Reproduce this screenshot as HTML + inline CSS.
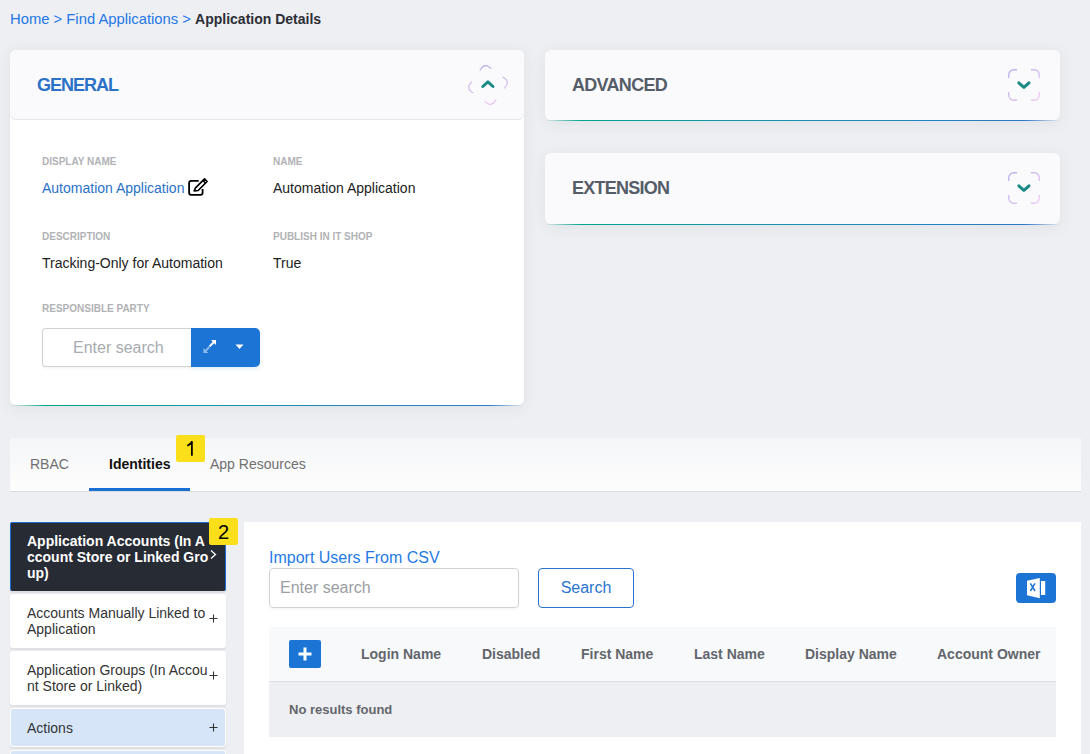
<!DOCTYPE html>
<html><head><meta charset="utf-8">
<style>
*{box-sizing:border-box;margin:0;padding:0}
html,body{width:1090px;height:754px;overflow:hidden}
body{background:#eeeff2;font-family:"Liberation Sans",sans-serif;position:relative;color:#222}
.abs{position:absolute}
.bc{left:10px;top:10px;font-size:14.8px;line-height:18px;color:#2478e6;white-space:nowrap}
.bc b{color:#2b2e35;font-size:14px}
.card{background:#fff;border-radius:6px;box-shadow:0 3px 16px rgba(40,50,90,.07)}
.card .hd{position:absolute;left:0;top:0;right:0;height:69px;background:#fafafc;border-radius:6px;box-shadow:0 1px 0 #e4e6ea}
.line{position:absolute;left:0;right:0;bottom:-1px;height:1px;background:linear-gradient(90deg,rgba(0,165,140,0) 0%,#00a58c 7%,#1b8fb0 50%,#2a7ac8 93%,rgba(42,122,200,0) 100%)}
.title{position:absolute;left:27px;top:26px;font-size:18px;font-weight:bold;line-height:18px;letter-spacing:-1.1px}
.lbl{font-size:10px;font-weight:bold;color:#b1b2b5;line-height:12px;white-space:nowrap}
.val{font-size:14px;color:#222;line-height:16px;white-space:nowrap}

.badge{background:#fbdf1b;color:#000;font-size:20px;line-height:27px;text-align:center;border-radius:2px}
.side{width:216px;background:#fff;border-radius:3px;box-shadow:0 2px 2px rgba(0,0,0,.07)}
.side.dark{background:#272b34;border:1px solid #1a6fd4;border-bottom:none;border-radius:2px}
.side.blue{background:#d6e6f8;border:1px solid #fff}
.stx{font-size:14px;line-height:16px;color:#333;white-space:nowrap}
.th{top:646px;font-size:14px;font-weight:bold;line-height:16px;color:#63666c}
</style></head><body>
<div class="abs bc">Home &gt; Find Applications &gt; <b>Application Details</b></div>

<!-- GENERAL -->
<div class="abs card" style="left:10px;top:50px;width:514px;height:355px">
  <div class="hd"><div class="title" style="color:#2a72c8;letter-spacing:-1px">GENERAL</div></div>
  <div class="line"></div>
</div>

<!-- ADVANCED -->
<div class="abs card" style="left:545px;top:50px;width:515px;height:70px;background:#fafafc">
  <div class="title" style="color:#555d68;letter-spacing:-.7px">ADVANCED</div>
  <div class="line"></div>
</div>
<!-- EXTENSION -->
<div class="abs card" style="left:545px;top:153px;width:515px;height:71px;background:#fafafc">
  <div class="title" style="color:#555d68;letter-spacing:-.75px">EXTENSION</div>
  <div class="line"></div>
</div>

<div class="abs lbl" style="left:42px;top:156px">DISPLAY NAME</div>
<div class="abs val" style="left:42px;top:180px;color:#2a72c8">Automation Application</div>
<div class="abs lbl" style="left:273px;top:156px">NAME</div>
<div class="abs val" style="left:273px;top:180px">Automation Application</div>
<div class="abs lbl" style="left:42px;top:231px">DESCRIPTION</div>
<div class="abs val" style="left:42px;top:255px">Tracking-Only for Automation</div>
<div class="abs lbl" style="left:273px;top:231px">PUBLISH IN IT SHOP</div>
<div class="abs val" style="left:273px;top:255px">True</div>
<div class="abs lbl" style="left:42px;top:303px">RESPONSIBLE PARTY</div>



<svg width="0" height="0" style="position:absolute">
 <defs>
  <linearGradient id="lg" x1="0" y1="0" x2="1" y2="1">
   <stop offset="0" stop-color="#bcaeec"/><stop offset="1" stop-color="#eccbf2"/>
  </linearGradient>
 </defs>
</svg>
<svg class="abs" style="left:472px;top:68.7px;transform:rotate(36deg)" width="32" height="32" viewBox="0 0 32 32">
 <path d="M0.75 8.6V5.75A5 5 0 0 1 5.75 0.75H8.6M23.4 0.75H26.25A5 5 0 0 1 31.25 5.75V8.6M31.25 23.4V26.25A5 5 0 0 1 26.25 31.25H23.4M8.6 31.25H5.75A5 5 0 0 1 0.75 26.25V23.4" fill="none" stroke="url(#lg)" stroke-width="1.3" stroke-linecap="round"/>
</svg>
<svg class="abs" style="left:472px;top:68.7px" width="32" height="32" viewBox="0 0 32 32">
 <path d="M10.8 17.5L15.9 12.9L21 17.5" fill="none" stroke="#1a8a85" stroke-width="3" stroke-linecap="round" stroke-linejoin="round"/>
</svg>
<svg class="abs" style="left:1008px;top:69px" width="32" height="32" viewBox="0 0 32 32">
 <path d="M0.75 8.6V5.75A5 5 0 0 1 5.75 0.75H8.6M23.4 0.75H26.25A5 5 0 0 1 31.25 5.75V8.6M31.25 23.4V26.25A5 5 0 0 1 26.25 31.25H23.4M8.6 31.25H5.75A5 5 0 0 1 0.75 26.25V23.4" fill="none" stroke="url(#lg)" stroke-width="1.3" stroke-linecap="round"/>
 <path d="M10.8 13.8L15.9 18.4L21 13.8" fill="none" stroke="#1a8a85" stroke-width="3" stroke-linecap="round" stroke-linejoin="round"/>
</svg>
<svg class="abs" style="left:1008px;top:172px" width="32" height="32" viewBox="0 0 32 32">
 <path d="M0.75 8.6V5.75A5 5 0 0 1 5.75 0.75H8.6M23.4 0.75H26.25A5 5 0 0 1 31.25 5.75V8.6M31.25 23.4V26.25A5 5 0 0 1 26.25 31.25H23.4M8.6 31.25H5.75A5 5 0 0 1 0.75 26.25V23.4" fill="none" stroke="url(#lg)" stroke-width="1.3" stroke-linecap="round"/>
 <path d="M10.8 13.8L15.9 18.4L21 13.8" fill="none" stroke="#1a8a85" stroke-width="3" stroke-linecap="round" stroke-linejoin="round"/>
</svg>
<!-- edit icon -->
<svg class="abs" style="left:186px;top:176px" width="24" height="22" viewBox="0 0 24 22">
  <path d="M12.7 4.9H5.1a2 2 0 0 0-2 2v9.9a2 2 0 0 0 2 2h9.5a2 2 0 0 0 2-2v-3.7" fill="none" stroke="#000" stroke-width="1.8"/>
  <path d="M8.2 15L9.5 11.9L18.5 2.9L21.1 5.5L12.1 14.5Z" fill="none" stroke="#000" stroke-width="1.7" stroke-linejoin="round"/>
  <path d="M16.9 4.5l2.6 2.6" stroke="#000" stroke-width="1.5"/>
</svg>

<!-- responsible party input -->
<div class="abs" style="left:42px;top:328px;width:150px;height:39px;border:1px solid #cfd2d7;border-right:none;border-radius:4px 0 0 4px;background:#fff;box-shadow:0 1px 3px rgba(0,0,0,.06)"></div>
<div class="abs" style="left:73px;top:338px;font-size:16px;line-height:19px;color:#a8abb0">Enter search</div>
<div class="abs" style="left:191px;top:328px;width:69px;height:39px;background:#1c74d4;border-radius:0 5px 5px 0;box-shadow:0 2px 4px rgba(30,100,200,.12)"></div>
<svg class="abs" style="left:202px;top:339px" width="16" height="16" viewBox="0 0 16 16">
  <path d="M9 1H14V6Z" fill="#fff"/>
  <path d="M12 3L7.6 7.4" stroke="#fff" stroke-width="2"/>
  <path d="M1.4 9V14H6.4Z" fill="#8ab8ec"/>
  <path d="M3.4 12L7.6 7.8" stroke="#8ab8ec" stroke-width="2"/>
</svg>
<svg class="abs" style="left:235px;top:344px" width="10" height="6" viewBox="0 0 10 6"><path d="M0.5 0.5h8l-4 4.5z" fill="#fff"/></svg>

<!-- tabs -->
<div class="abs" style="left:10px;top:438px;width:1071px;height:54px;background:linear-gradient(180deg,#f5f6f8,#fdfdfd);border-bottom:1px solid #d8dadd"></div>
<div class="abs val" style="left:30px;top:456px;color:#707070">RBAC</div>
<div class="abs val" style="left:109px;top:456px;font-weight:bold;color:#111">Identities</div>
<div class="abs val" style="left:210px;top:456px;color:#707070">App Resources</div>
<div class="abs" style="left:89px;top:488px;width:101px;height:3px;background:#1a6fd4"></div>
<div class="abs badge" style="left:176px;top:435px;width:29px;height:27px"><svg width="29" height="27" viewBox="0 0 29 27" style="display:block"><path d="M15.9 6.2V20.8" stroke="#000" stroke-width="1.75"/><path d="M15.9 6.6Q14.6 9.3 11.3 10.8" fill="none" stroke="#000" stroke-width="1.8"/></svg></div>

<!-- sidebar -->
<div class="abs side dark" style="left:10px;top:522px;height:69px"></div>
<div class="abs stx" style="left:27px;top:533px;color:#fff;font-weight:bold">Application Accounts (In A<br>ccount Store or Linked Gro<br>up)</div>
<svg class="abs" style="left:209px;top:549px" width="9" height="11" viewBox="0 0 9 11"><path d="M2 1.5L6.5 5.5L2 9.5" fill="none" stroke="#fff" stroke-width="1.3"/></svg>
<div class="abs badge" style="left:209px;top:518px;width:29px;height:27px;line-height:29px">2</div>
<div class="abs side" style="left:10px;top:594px;height:54px"></div>
<div class="abs stx" style="left:27px;top:605px">Accounts Manually Linked to<br>Application</div>
<svg class="abs plus" style="left:209px;top:614px" width="9" height="9" viewBox="0 0 9 9"><path d="M4.5 0.5v8M0.5 4.5h8" stroke="#333" stroke-width="1.1"/></svg>
<div class="abs side" style="left:10px;top:651px;height:54px"></div>
<div class="abs stx" style="left:27px;top:662px">Application Groups (In Accou<br>nt Store or Linked)</div>
<svg class="abs plus" style="left:209px;top:671px" width="9" height="9" viewBox="0 0 9 9"><path d="M4.5 0.5v8M0.5 4.5h8" stroke="#333" stroke-width="1.1"/></svg>
<div class="abs side blue" style="left:10px;top:708px;height:39px"></div>
<div class="abs stx" style="left:27px;top:720px">Actions</div>
<svg class="abs plus" style="left:209px;top:723px" width="9" height="9" viewBox="0 0 9 9"><path d="M4.5 0.5v8M0.5 4.5h8" stroke="#333" stroke-width="1.1"/></svg>
<div class="abs side blue" style="left:10px;top:750px;height:38px"></div>

<!-- right panel -->
<div class="abs" style="left:244px;top:522px;width:837px;height:240px;background:#fff"></div>
<div class="abs" style="left:269px;top:548px;font-size:16px;line-height:19px;color:#1f7ae6">Import Users From CSV</div>
<div class="abs" style="left:269px;top:568px;width:250px;height:40px;border:1px solid #cfd3d8;border-radius:4px;box-shadow:0 1px 3px rgba(0,0,0,.05)"></div>
<div class="abs" style="left:280px;top:578px;font-size:16px;line-height:19px;color:#9b9ea3">Enter search</div>
<div class="abs" style="left:538px;top:568px;width:96px;height:40px;border:1px solid #2a75cf;border-radius:4px;text-align:center;font-size:16px;line-height:38px;color:#2a75cf">Search</div>
<div class="abs" style="left:1016px;top:573px;width:40px;height:30px;background:#1c74d4;border-radius:4px"></div>
<svg class="abs" style="left:1026px;top:577px" width="20" height="22" viewBox="0 0 20 22">
  <path d="M1 3.8L13.8 1v20.2L1 18.2z" fill="#fff"/>
  <rect x="15" y="4" width="4.2" height="14" fill="#fff"/>
  <path d="M4.4 6.4l4.6 7.6M9 6.4l-4.6 7.6" stroke="#1c74d4" stroke-width="1.5"/>
</svg>

<!-- table -->
<div class="abs" style="left:269px;top:627px;width:787px;height:55px;background:#f8f9fb;border-bottom:1px solid #dcdfe3"></div>
<div class="abs" style="left:289px;top:640px;width:32px;height:28px;background:#1c74d4;border-radius:2px"></div>
<svg class="abs" style="left:297px;top:646px" width="16" height="16" viewBox="0 0 16 16"><path d="M8 1.5v13M1.5 8h13" stroke="#fff" stroke-width="3"/></svg>
<div class="abs th" style="left:361px">Login Name</div>
<div class="abs th" style="left:482px">Disabled</div>
<div class="abs th" style="left:581px">First Name</div>
<div class="abs th" style="left:694px">Last Name</div>
<div class="abs th" style="left:805px">Display Name</div>
<div class="abs th" style="left:937px">Account Owner</div>
<div class="abs" style="left:269px;top:682px;width:787px;height:55px;background:#eeeff2"></div>
<div class="abs" style="left:289px;top:702px;font-size:13px;font-weight:bold;line-height:15px;color:#63666c">No results found</div>
</body></html>
